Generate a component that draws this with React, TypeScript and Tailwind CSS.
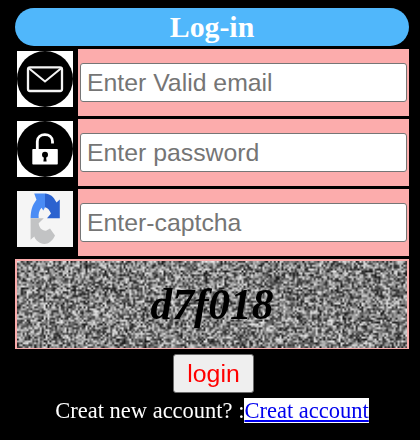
import { useEffect, useRef, type ReactNode } from "react";

function MailIcon() {
  return (
    <svg viewBox="0 0 56 56" className="block size-14 bg-white">
      <circle cx="28" cy="28" r="28" fill="#000" />
      <rect x="11" y="16.3" width="34" height="23.7" rx="2" fill="none" stroke="#f4f4f4" strokeWidth="2.3" />
      <path d="M11.5 17 L28 30.5 L44.5 17" fill="none" stroke="#f4f4f4" strokeWidth="2.1" />
    </svg>
  );
}

function LockIcon() {
  return (
    <svg viewBox="0 0 56 56" className="block size-14 bg-white">
      <circle cx="28" cy="28" r="28" fill="#000" />
      <path d="M20.3 29 V20.5 C20.3 11.3 35.5 11.3 35.5 20.5 V22.5" fill="none" stroke="#fff" strokeWidth="2.8" />
      <rect x="15.3" y="28" width="25.5" height="15.5" rx="0.8" fill="#fff" />
      <circle cx="28" cy="33.8" r="3" fill="#000" />
      <path d="M27.2 34 h1.6 l0.8 6.5 h-3.2 z" fill="#000" />
    </svg>
  );
}

function CaptchaIcon() {
  return (
    <svg viewBox="0 0 56 56" className="block size-14 bg-[#f5f5f5]">
      <path d="M17.2 2.4 H28 V16.2 L26.3 19.5 L24.5 16.8 C22 19.5 21.2 23 21.7 27.2 H13.6 C13.8 19.5 15 14.5 19.5 8.7 Z" fill="#4a8cf5" />
      <path d="M28 2.4 C33 2.8 36.5 5.2 39.5 11.5 L42.8 8.5 V27.2 H30 L34 22.5 C32.5 19 30.8 16.8 28 16.2 Z" fill="#2b62cf" />
      <path d="M13.6 27.2 H26.8 L21.7 32.2 C22 36 24.5 39.8 29 39.7 L33 37.5 L38 44.5 C35.5 50 31.5 53 27.5 53 C22.5 52.5 18.5 49.5 17.3 45.5 L13.6 48.7 Z" fill="#c2c3c4" />
    </svg>
  );
}

function Field({ icon, placeholder }: { icon: ReactNode; placeholder: string }) {
  return (
    <div className="flex h-[67px]">
      <div className="w-[63px] shrink-0 p-0.5">{icon}</div>
      <div className="flex flex-1 items-center bg-[#fcacac] px-0.5">
        <input
          aria-label={placeholder}
          placeholder={placeholder}
          className="h-[39px] w-full min-w-0 rounded-[3px] border border-[#767676] bg-white px-1.5 font-['Liberation_Sans',sans-serif] text-[24.8px] leading-[29px] text-black placeholder:text-[#757575]"
        />
      </div>
    </div>
  );
}

function Captcha({ code }: { code: string }) {
  const ref = useRef<HTMLCanvasElement>(null);
  useEffect(() => {
    const ctx = ref.current?.getContext("2d");
    if (!ctx) return;
    const { width, height } = ctx.canvas;
    const image = ctx.createImageData(width, height);
    let seed = 7018;
    const random = () => {
      seed = (Math.imul(seed, 1664525) + 1013904223) >>> 0;
      return seed / 4294967296;
    };
    for (let i = 0; i < image.data.length; i += 4) {
      const shade = Math.floor(20 + random() * 215);
      image.data[i] = shade;
      image.data[i + 1] = shade;
      image.data[i + 2] = shade;
      image.data[i + 3] = 255;
    }
    ctx.putImageData(image, 0, 0);
  }, []);
  return (
    <div className="grid h-[90px] border-2 border-b border-[#fcacac]">
      <canvas ref={ref} width={205} height={46} className="col-start-1 row-start-1 h-[87px] w-[390px]" />
      <div className="relative col-start-1 row-start-1 flex items-center justify-center text-[43.5px] leading-none font-bold text-black italic">
        {code}
      </div>
    </div>
  );
}

export default function App() {
  return (
    <main className="h-[440px] w-[420px] bg-black pt-2 pr-[11px] pl-[15px] font-['Liberation_Serif',serif] text-white">
      <div className="flex flex-col gap-[3px]">
        <h1 className="h-[38px] rounded-full bg-[#50b7fb] text-center text-[29.8px] leading-[38px] font-bold">Log-in</h1>
        <Field icon={<MailIcon />} placeholder="Enter Valid email" />
        <Field icon={<LockIcon />} placeholder="Enter password" />
        <Field icon={<CaptchaIcon />} placeholder="Enter-captcha" />
        <Captcha code="d7f018" />
      </div>
      <div className="mt-[5px] pl-[3px] text-center">
        <button className="mx-auto block h-[39px] w-[81px] rounded-[3px] border border-[#6b6b6b] bg-[#efefef] font-['Liberation_Sans',sans-serif] text-[24.8px] leading-[37px] text-[#ff0000]">
          login
        </button>
      </div>
      <p className="mt-[5px] text-center text-[22.5px] leading-[25px] whitespace-nowrap">
        Creat new account? :
        <a href="#" className="inline-block bg-white text-[#0000ee] underline">Creat account</a>
      </p>
    </main>
  );
}
